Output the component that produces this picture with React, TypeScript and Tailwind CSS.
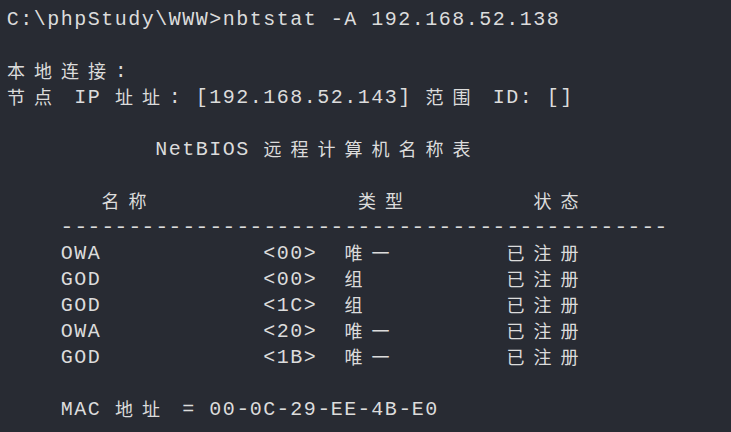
import React from 'react';

const pad = (n: number) => ' '.repeat(n);

const row = (name: string, code: string, kind: string) =>
  pad(4) + name + pad(12) + code + pad(2) + kind + pad(kind.length === 2 ? 8 : 10) + '已注册';

const lines: string[] = [
  'C:\\phpStudy\\WWW>nbtstat -A 192.168.52.138',
  '',
  '本地连接:',
  '节点 IP 址址: [192.168.52.143] 范围 ID: []',
  '',
  pad(11) + 'NetBIOS 远程计算机名称表',
  '',
  pad(7) + '名称' + pad(15) + '类型' + pad(9) + '状态',
  pad(4) + '-'.repeat(45),
  row('OWA', '<00>', '唯一'),
  row('GOD', '<00>', '组'),
  row('GOD', '<1C>', '组'),
  row('OWA', '<20>', '唯一'),
  row('GOD', '<1B>', '唯一'),
  '',
  pad(4) + 'MAC 地址 = 00-0C-29-EE-4B-E0',
];

const isWide = (ch: string) => ch.charCodeAt(0) > 0x2e80;

const Cell: React.FC<{ ch: string }> = ({ ch }) => {
  if (isWide(ch)) {
    return (
      <span className="w-[27px] shrink-0 pl-[1px] text-[18px] leading-[23px] font-['Noto_Sans_CJK_SC',sans-serif]">
        {ch}
      </span>
    );
  }
  if (ch === '-') {
    return (
      <span className="w-[13.5px] shrink-0 text-center scale-x-[1.1] text-[20px] leading-[26px] font-['Liberation_Mono',monospace]">
        -
      </span>
    );
  }
  return (
    <span className="w-[13.5px] shrink-0 text-center text-[20px] leading-[26px] font-['Liberation_Mono',monospace]">
      {ch === ' ' ? '\u00a0' : ch}
    </span>
  );
};

export default function App() {
  return (
    <div className="w-full min-h-screen bg-[#282b33] text-[#dcdcdc] pl-[6px] pt-[7px] overflow-hidden">
      {lines.map((line, i) => (
        <div key={i} className="flex items-start h-[26px] whitespace-pre">
          {Array.from(line).map((ch, j) => (
            <Cell key={j} ch={ch} />
          ))}
        </div>
      ))}
    </div>
  );
}
